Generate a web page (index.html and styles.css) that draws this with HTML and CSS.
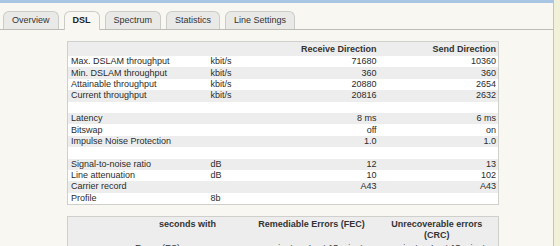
FILE: index.html
```html
<!DOCTYPE html>
<html lang="en">
<head>
  <meta charset="UTF-8" />
  <title>DSL</title>
  <link rel="stylesheet" href="styles.css">
</head>
<body>
  <div class="page">
    <div class="tabs">
      <div class="tab">Overview</div>
      <div class="tab active">DSL</div>
      <div class="tab">Spectrum</div>
      <div class="tab">Statistics</div>
      <div class="tab">Line Settings</div>
    </div>

    <table class="dsl">
      <colgroup>
        <col class="c-label"><col class="c-unit"><col class="c-rx"><col class="c-tx">
      </colgroup>
      <tr class="head"><th></th><th></th><th class="num">Receive Direction</th><th class="num">Send Direction</th></tr>
      <tr><td>Max. DSLAM throughput</td><td>kbit/s</td><td class="num">71680</td><td class="num">10360</td></tr>
      <tr class="alt"><td>Min. DSLAM throughput</td><td>kbit/s</td><td class="num">360</td><td class="num">360</td></tr>
      <tr><td>Attainable throughput</td><td>kbit/s</td><td class="num">20880</td><td class="num">2654</td></tr>
      <tr class="alt"><td>Current throughput</td><td>kbit/s</td><td class="num">20816</td><td class="num">2632</td></tr>
      <tr><td></td><td></td><td></td><td></td></tr>
      <tr class="alt"><td>Latency</td><td></td><td class="num">8 ms</td><td class="num">6 ms</td></tr>
      <tr><td>Bitswap</td><td></td><td class="num">off</td><td class="num">on</td></tr>
      <tr class="alt"><td>Impulse Noise Protection</td><td></td><td class="num">1.0</td><td class="num">1.0</td></tr>
      <tr><td></td><td></td><td></td><td></td></tr>
      <tr class="alt"><td>Signal-to-noise ratio</td><td>dB</td><td class="num">12</td><td class="num">13</td></tr>
      <tr><td>Line attenuation</td><td>dB</td><td class="num">10</td><td class="num">102</td></tr>
      <tr class="alt"><td>Carrier record</td><td></td><td class="num">A43</td><td class="num">A43</td></tr>
      <tr><td>Profile</td><td>8b</td><td></td><td></td></tr>
    </table>

    <table class="errors">
      <colgroup>
        <col style="width:60px"><col style="width:60px"><col style="width:60px"><col style="width:58px"><col style="width:70px"><col style="width:52px"><col style="width:71px">
      </colgroup>
      <tr class="head">
        <th></th>
        <th colspan="2">seconds with</th>
        <th colspan="2">Remediable Errors (FEC)</th>
        <th colspan="2" class="narrow">Unrecoverable errors (CRC)</th>
      </tr>
      <tr class="head sub">
        <th></th>
        <th>Errors (ES)</th>
        <th>many errors (SES)</th>
        <th>per minute</th>
        <th>Last 15 minutes</th>
        <th>per minute</th>
        <th>Last 15 minutes</th>
      </tr>
    </table>
  </div>
</body>
</html>
```

FILE: styles.css
```css
html, body {
  height: 100%;
}
body {
  margin: 0;
  background: #f1f1d9;
  font-family: "Liberation Sans", Arial, sans-serif;
  font-size: 9px;
  color: #2b2b2b;
  overflow: hidden;
}
.page {
  width: 554px;
  height: 100%;
  background: #f8f7f2;
  border-top: 3px solid #a9c5e4;
  border-right: 1px solid #c4c4bc;
  box-sizing: border-box;
}
.tabs {
  display: flex;
  gap: 5px;
  padding-left: 3px;
  margin-top: 8px;
  border-bottom: 1px solid #bdbcb7;
}
.tab {
  height: 17px;
  line-height: 17px;
  padding: 0 8px;
  border: 1px solid #cbcbc8;
  border-bottom: none;
  border-radius: 6px 6px 0 0;
  background: #e9e9e7;
  color: #333;
  text-align: center;
}
.tab.active {
  background: #f8f7f2;
  font-weight: bold;
  color: #222;
  margin-bottom: -1px;
  height: 18px;
}

table {
  border-collapse: collapse;
  table-layout: fixed;
  width: 431px;
  margin-left: 67px;
  border: 1px solid #cfcfcc;
}
.dsl {
  margin-top: 11px;
}
.c-label { width: 140px; }
.c-unit { width: 80px; }
.c-rx { width: 91px; }
.c-tx { width: 120px; }
td, th {
  padding: 0 2px 0 3px;
  height: 11.4px;
  line-height: 11px;
  text-align: left;
  white-space: nowrap;
  overflow: hidden;
}
.dsl tr {
  background: #fff;
}
.dsl tr.alt, .dsl tr.head {
  background: #ededed;
}
.dsl tr.head th {
  height: 13px;
  padding-top: 1px;
}
th {
  font-weight: bold;
  color: #333;
}
.num {
  text-align: right;
}

.errors {
  margin-top: 11px;
  background: #ededed;
}
.errors th {
  text-align: center;
  white-space: normal;
  vertical-align: top;
  padding: 2px 2px 0;
}
.errors th.narrow {
  padding: 2px 12px 0;
}
.errors tr.sub th {
  font-weight: normal;
  padding-top: 2px;
}
```
